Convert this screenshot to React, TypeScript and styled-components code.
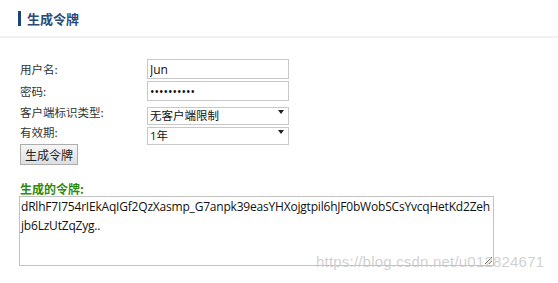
import styled, { createGlobalStyle } from 'styled-components';

const GlobalStyle = createGlobalStyle`
  html, body {
    margin: 0;
    padding: 0;
    background: #ffffff;
  }
  body {
    font-family: "Open Sans", "Noto Sans CJK SC", sans-serif;
    color: #333333;
  }
`;

const Page = styled.div`
  position: relative;
  width: 558px;
  height: 283px;
  overflow: hidden;
  background: #ffffff;
`;

const Header = styled.div`
  display: flex;
  align-items: center;
  gap: 6px;
  height: 38px;
  padding-left: 18px;
  border-bottom: 2px solid #f1f1f1;
  box-sizing: border-box;
`;

const Bar = styled.span`
  width: 3px;
  height: 15px;
  background: #1d4478;
`;

const Title = styled.h2`
  margin: 0;
  font-family: "Noto Sans CJK SC", sans-serif;
  font-size: 13px;
  font-weight: 700;
  color: #2b4a77;
`;

const Body = styled.div`
  padding: 21px 0 0 20px;
`;

const Form = styled.div`
  display: grid;
  grid-template-columns: 127px 142px;
  row-gap: 2px;
  align-items: center;
`;

const Label = styled.label`
  font-family: "Noto Sans CJK SC", sans-serif;
  font-size: 11.5px;
  color: #333333;
  line-height: 16px;
`;

const TextInput = styled.input`
  box-sizing: border-box;
  width: 142px;
  height: 20px;
  margin: 0;
  padding: 0 2px;
  border: 1px solid #c8c8c8;
  font-family: "Open Sans", "Noto Sans CJK SC", sans-serif;
  font-size: 12px;
  color: #111111;
  outline: none;
  background: #ffffff;
`;

const SelectWrap = styled.div`
  position: relative;
  width: 142px;
  height: 18px;
`;

const Select = styled.select`
  box-sizing: border-box;
  appearance: none;
  width: 142px;
  height: 18px;
  margin: 0;
  padding: 0 2px;
  border: 1px solid #c8c8c8;
  border-radius: 0;
  font-family: "Open Sans", "Noto Sans CJK SC", sans-serif;
  font-size: 11.5px;
  color: #111111;
  background: #ffffff;
  outline: none;
`;

const Arrow = styled.span`
  position: absolute;
  right: 5px;
  top: 7px;
  width: 0;
  height: 0;
  border-left: 3px solid transparent;
  border-right: 3px solid transparent;
  border-top: 4px solid #222222;
  pointer-events: none;
`;

const Button = styled.button`
  grid-column: 1 / 2;
  justify-self: start;
  box-sizing: border-box;
  margin-top: 1px;
  height: 21px;
  padding: 0 4px;
  border: 1px solid #adadad;
  border-radius: 0;
  background: linear-gradient(#f6f6f6, #dedede);
  font-family: "Noto Sans CJK SC", sans-serif;
  font-size: 12px;
  color: #222222;
`;

const ResultLabel = styled.div`
  margin-top: 16px;
  font-family: "Noto Sans CJK SC", sans-serif;
  font-size: 12px;
  font-weight: 700;
  color: #2f8a0c;
  line-height: 15px;
`;

const TokenBox = styled.textarea`
  display: block;
  box-sizing: border-box;
  margin: 0 0 0 -1px;
  width: 475px;
  height: 70px;
  padding: 0 1px;
  border: 1px solid #c3c3c3;
  resize: both;
  font-family: "Open Sans", sans-serif;
  font-size: 12px;
  letter-spacing: -0.2px;
  line-height: 19px;
  color: #111111;
  outline: none;
`;

const Watermark = styled.div`
  position: absolute;
  left: 316px;
  top: 253px;
  font-family: "Liberation Sans", Arial, sans-serif;
  font-size: 15px;
  color: rgba(200, 200, 200, 0.85);
  pointer-events: none;
  letter-spacing: 0.2px;
`;

const token =
  'dRlhF7I754rIEkAqIGf2QzXasmp_G7anpk39easYHXojgtpil6hJF0bWobSCsYvcqHetKd2Zehjb6LzUtZqZyg..';

export default function App() {
  return (
    <Page>
      <GlobalStyle />
      <Header>
        <Bar />
        <Title>生成令牌</Title>
      </Header>
      <Body>
        <Form>
          <Label>用户名:</Label>
          <TextInput defaultValue="Jun" />
          <Label>密码:</Label>
          <TextInput type="password" defaultValue="1234567890" />
          <Label>客户端标识类型:</Label>
          <SelectWrap>
            <Select defaultValue="none">
              <option value="none">无客户端限制</option>
            </Select>
            <Arrow />
          </SelectWrap>
          <Label>有效期:</Label>
          <SelectWrap>
            <Select defaultValue="1y">
              <option value="1y">1年</option>
            </Select>
            <Arrow />
          </SelectWrap>
          <Button type="button">生成令牌</Button>
        </Form>
        <ResultLabel>生成的令牌:</ResultLabel>
        <TokenBox readOnly value={token} />
      </Body>
      <Watermark>https://blog.csdn.net/u012824671</Watermark>
    </Page>
  );
}
